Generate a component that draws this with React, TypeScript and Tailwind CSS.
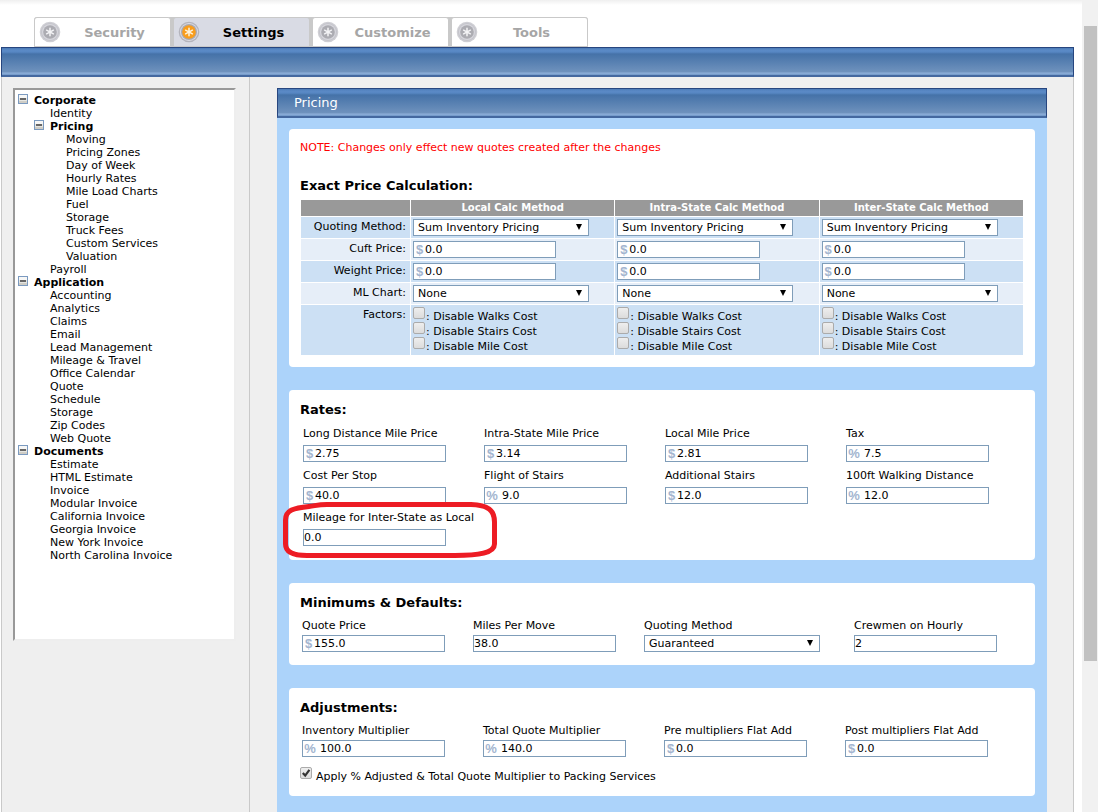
import { useId, type ReactNode } from "react";

type TreeItem = { label: string; level: 0 | 1 | 2; group?: boolean };

const leaf = (level: 1 | 2, ...labels: string[]): TreeItem[] => labels.map((label) => ({ label, level }));

const TREE: TreeItem[] = [
  { label: "Corporate", level: 0, group: true },
  ...leaf(1, "Identity"),
  { label: "Pricing", level: 1, group: true },
  ...leaf(2, "Moving", "Pricing Zones", "Day of Week", "Hourly Rates", "Mile Load Charts", "Fuel", "Storage", "Truck Fees", "Custom Services", "Valuation"),
  ...leaf(1, "Payroll"),
  { label: "Application", level: 0, group: true },
  ...leaf(1, "Accounting", "Analytics", "Claims", "Email", "Lead Management", "Mileage & Travel", "Office Calendar", "Quote", "Schedule", "Storage", "Zip Codes", "Web Quote"),
  { label: "Documents", level: 0, group: true },
  ...leaf(1, "Estimate", "HTML Estimate", "Invoice", "Modular Invoice", "California Invoice", "Georgia Invoice", "New York Invoice", "North Carolina Invoice"),
];

const TREE_INDENT = ["pl-[3px]", "pl-[19px]", "pl-[35px]"];

const METHODS = ["Local Calc Method", "Intra-State Calc Method", "Inter-State Calc Method"];
const FACTORS = ["Disable Walks Cost", "Disable Stairs Cost", "Disable Mile Cost"];

const BAR =
  "border border-[#27467f] border-b-2 border-b-[#44689f] bg-[linear-gradient(to_bottom,#4a79b5_0px,#5b8ac6_2px,#5787c3_4px,#4572a8_6px,#6f92bd_24px,#8fb0da_25px,#6f96c6_27px)]";

function TabIcon({ active }: { active?: boolean }) {
  return (
    <svg viewBox="0 0 22 22" className="size-[22px] shrink-0" aria-hidden="true">
      <circle cx="11" cy="11" r="10.3" fill={active ? "#b4b4bc" : "#cfcfd4"} />
      <circle cx="11" cy="11" r="9" fill={active ? "#dcdce4" : "#c4c4cb"} />
      <circle cx="11" cy="11" r="8" fill={active ? "#a9a9b2" : "#d6d6dc"} />
      <circle cx="11" cy="11" r="6.8" fill={active ? "#f99d1c" : "#acacb2"} />
      <path
        d="M11 7.2v7.6M7.6 9.2l6.8 3.6M14.4 9.2l-6.8 3.6"
        stroke={active ? "#fff3dc" : "#f4f4f6"}
        strokeWidth="1.5"
        strokeLinecap="round"
      />
    </svg>
  );
}

function Tab({ label, active }: { label: string; active?: boolean }) {
  return (
    <a
      href="#"
      aria-current={active ? "page" : undefined}
      className={`flex h-[30px] w-[137px] items-center rounded-t-[3px] border border-[#c9c9c9] pr-[2px] pl-1 text-[13px] font-bold ${
        active ? "bg-[#d9dbe4] text-black" : "bg-white text-[#a6a6a6]"
      }`}
    >
      <TabIcon active={active} />
      <span className="flex-1 text-center">{label}</span>
    </a>
  );
}

function Minus() {
  return (
    <svg viewBox="0 0 10 10" className="size-[10px]" aria-hidden="true">
      <rect x="0.5" y="0.5" width="9" height="9" fill="#e6e6e2" stroke="#7b9ac0" />
      <rect x="1" y="1" width="8" height="3" fill="#f7f7f6" />
      <rect x="1" y="7" width="8" height="2" fill="#cfcdc6" />
      <rect x="2" y="4" width="6" height="2" fill="#666" />
    </svg>
  );
}

function TreeRow({ item }: { item: TreeItem }) {
  return (
    <li className={`flex h-[13px] items-center gap-[6px] ${TREE_INDENT[item.level]}`}>
      {item.group ? (
        <button type="button" aria-label={`Collapse ${item.label}`} className="mb-[3px] size-[10px]">
          <Minus />
        </button>
      ) : (
        <span className="w-[10px]" />
      )}
      <a href="#" className={item.group ? "font-bold" : ""}>
        {item.label}
      </a>
    </li>
  );
}

function TextBox({ id, value, unit, label }: { id?: string; value: string; unit?: "$" | "%"; label?: string }) {
  return (
    <div className="flex h-[17px] w-[143px] items-center border border-[#7f9db9] bg-white">
      {unit && (
        <span
          className={`text-center font-['Liberation_Sans',sans-serif] text-[13px] leading-[15px] font-bold text-[#a3b5cf] ${
            unit === "$" ? "w-[11px]" : "w-[14px] mr-[3px]"
          }`}
        >
          {unit}
        </span>
      )}
      <input id={id} aria-label={label} defaultValue={value} className="h-full min-w-0 flex-1 bg-transparent leading-[15px] outline-none" />
    </div>
  );
}

function SelectBox({ id, value, label }: { id?: string; value: string; label?: string }) {
  return (
    <div className="relative h-[17px] w-[176px]">
      <select id={id} aria-label={label} className="h-full w-full appearance-none border border-[#7f9db9] bg-white pl-1 leading-[15px] outline-none">
        <option>{value}</option>
      </select>
      <svg viewBox="0 0 6 6" className="pointer-events-none absolute top-[5px] right-[7px] size-[6px]" aria-hidden="true">
        <path d="M0 0h6L3 6z" fill="#000" />
      </svg>
    </div>
  );
}

function CheckBox({ id, checked }: { id: string; checked?: boolean }) {
  return (
    <span className="relative size-[12px] shrink-0">
      <input
        id={id}
        type="checkbox"
        defaultChecked={checked}
        className="peer block size-[12px] appearance-none rounded-[2px] border border-[#ababab] bg-linear-to-b from-[#eeeeee] to-[#dcdcdc]"
      />
      <svg viewBox="0 0 12 12" className="pointer-events-none absolute inset-0 hidden peer-checked:block" aria-hidden="true">
        <path d="M2.8 6l2.4 2.6L9.4 2.8" fill="none" stroke="#333" strokeWidth="2.2" />
      </svg>
    </span>
  );
}

function Factor({ label }: { label: string }) {
  const id = useId();
  return (
    <div className="flex h-[15px] items-start gap-[1px]">
      <CheckBox id={id} />
      <label htmlFor={id} className="pt-[2px] leading-[15px]">
        : {label}
      </label>
    </div>
  );
}

function Card({ title, children, note }: { title: string; children: ReactNode; note?: string }) {
  return (
    <section className="rounded-[4px] bg-white px-[11px] pt-[11px] pb-3">
      {note && <p className="mb-[22px] text-[#f00]">{note}</p>}
      <h2 className="text-[13px] leading-[18px] font-bold">{title}</h2>
      {children}
    </section>
  );
}

type FieldProps = { label: string; value: string; unit?: "$" | "%"; select?: boolean; tight?: boolean; marked?: boolean };

function Field({ label, value, unit, select, tight, marked }: FieldProps) {
  const id = useId();
  return (
    <div className={`relative flex flex-col ${tight ? "gap-[2px]" : "gap-1"}`}>
      <label htmlFor={id} className="leading-[15px] whitespace-nowrap">
        {label}
      </label>
      {select ? <SelectBox id={id} value={value} /> : <TextBox id={id} value={value} unit={unit} />}
      {marked && (
        <svg viewBox="0 0 214 56" className="pointer-events-none absolute -top-2 -left-5 h-[56px] w-[214px] max-w-none" aria-hidden="true">
          <path
            d="M26 4.5C11 6 2.5 8 2.5 18V42C2.5 50 10 53.5 24 53.5H172C196 53.5 211.5 51 211.5 42V20C211.5 8 205 3 188 2.5H44C34 2.5 32 4 26 4.5Z"
            fill="none"
            stroke="#ed1c24"
            strokeWidth="5"
            strokeLinejoin="round"
          />
        </svg>
      )}
    </div>
  );
}

function PriceTable() {
  const rows: { label: string; cell: (method: string) => ReactNode }[] = [
    { label: "Quoting Method:", cell: (m) => <SelectBox value="Sum Inventory Pricing" label={`${m} quoting method`} /> },
    { label: "Cuft Price:", cell: (m) => <TextBox value="0.0" unit="$" label={`${m} cuft price`} /> },
    { label: "Weight Price:", cell: (m) => <TextBox value="0.0" unit="$" label={`${m} weight price`} /> },
    { label: "ML Chart:", cell: (m) => <SelectBox value="None" label={`${m} ML chart`} /> },
    { label: "Factors:", cell: () => <div className="pb-px">{FACTORS.map((f) => <Factor key={f} label={f} />)}</div> },
  ];
  return (
    <table className="mt-1 w-full table-fixed border-separate border-spacing-px">
      <thead>
        <tr className="h-4 bg-[#999] text-[10px] leading-4 text-white">
          <th className="w-[109px] p-0" />
          {METHODS.map((m) => (
            <th key={m} className="p-0">
              {m}
            </th>
          ))}
        </tr>
      </thead>
      <tbody>
        {rows.map((row) => (
          <tr key={row.label} className="odd:bg-[#cce0f4] even:bg-[#e6eef8]">
            <th scope="row" className="py-[2px] pr-1 pl-0 text-right align-top leading-[15px] font-normal">
              {row.label}
            </th>
            {METHODS.map((m) => (
              <td key={m} className="p-[2px] align-top">
                {row.cell(m)}
              </td>
            ))}
          </tr>
        ))}
      </tbody>
    </table>
  );
}

export default function App() {
  const packingId = useId();
  return (
    <div className="flex min-h-screen bg-white font-['DejaVu_Sans',Verdana,sans-serif] text-[11px] leading-[15px] text-black">
      <div className="flex min-w-0 flex-1 flex-col bg-[linear-gradient(to_bottom,#efefef_0px,#ffffff_5px)] pr-2 pl-px">
        <nav className="pt-[17px] pl-[33px]">
          <div className="flex w-fit gap-[2px] rounded-t-[3px] bg-[#c9c9c9]">
            <Tab label="Security" />
            <Tab label="Settings" active />
            <Tab label="Customize" />
            <Tab label="Tools" />
          </div>
        </nav>
        <div className={`h-[30px] ${BAR}`} />
        <div className="flex flex-1 border-x border-[#c9c9c9] bg-[#efefef]">
          <aside className="w-[248px] shrink-0 border-r border-[#c9c9c9] pt-[11px] pr-[13px] pl-[11px]">
            <ul className="h-[553px] border-2 border-t-[#999] border-r-[#eee] border-b-[#eee] border-l-[#999] bg-white pt-1 leading-[13px]">
              {TREE.map((item, i) => (
                <TreeRow key={i} item={item} />
              ))}
            </ul>
          </aside>
          <main className="flex min-w-0 flex-1 flex-col pt-[11px] pr-[26px] pl-[27px]">
            <h1 className={`h-[30px] pl-4 text-[13px] leading-[28px] text-white ${BAR}`}>Pricing</h1>
            <div className="flex flex-1 flex-col gap-[23px] bg-[#acd3fa] px-3 pt-[11px]">
              <Card title="Exact Price Calculation:" note="NOTE: Changes only effect new quotes created after the changes">
                <div className="-mb-px">
                  <PriceTable />
                </div>
              </Card>
              <Card title="Rates:">
                <div className="-mr-[3px] ml-[3px] grid grid-cols-4 gap-y-[6px] pt-[7px] pb-[2px]">
                  <Field label="Long Distance Mile Price" value="2.75" unit="$" />
                  <Field label="Intra-State Mile Price" value="3.14" unit="$" />
                  <Field label="Local Mile Price" value="2.81" unit="$" />
                  <Field label="Tax" value="7.5" unit="%" />
                  <Field label="Cost Per Stop" value="40.0" unit="$" />
                  <Field label="Flight of Stairs" value="9.0" unit="%" />
                  <Field label="Additional Stairs" value="12.0" unit="$" />
                  <Field label="100ft Walking Distance" value="12.0" unit="%" />
                  <Field label="Mileage for Inter-State as Local" value="0.0" marked />
                </div>
              </Card>
              <Card title="Minimums & Defaults:">
                <div className="ml-[2px] grid grid-cols-[171px_171px_210px_1fr] pt-[6px] pb-px">
                  <Field tight label="Quote Price" value="155.0" unit="$" />
                  <Field tight label="Miles Per Move" value="38.0" />
                  <Field tight label="Quoting Method" value="Guaranteed" select />
                  <Field tight label="Crewmen on Hourly" value="2" />
                </div>
              </Card>
              <Card title="Adjustments:">
                <div className="-mr-[2px] ml-[2px] grid grid-cols-4 pt-[6px]">
                  <Field tight label="Inventory Multiplier" value="100.0" unit="%" />
                  <Field tight label="Total Quote Multiplier" value="140.0" unit="%" />
                  <Field tight label="Pre multipliers Flat Add" value="0.0" unit="$" />
                  <Field tight label="Post multipliers Flat Add" value="0.0" unit="$" />
                </div>
                <div className="flex items-start gap-1 pt-[10px]">
                  <CheckBox id={packingId} checked />
                  <label htmlFor={packingId} className="pt-[2px]">
                    Apply % Adjusted &amp; Total Quote Multiplier to Packing Services
                  </label>
                </div>
              </Card>
            </div>
          </main>
        </div>
      </div>
      <div className="w-4 shrink-0 bg-[#f1f1f1] pt-[26px] pr-px pl-[2px]" aria-hidden="true">
        <div className="h-[635px] bg-[#c1c1c1]" />
      </div>
    </div>
  );
}
